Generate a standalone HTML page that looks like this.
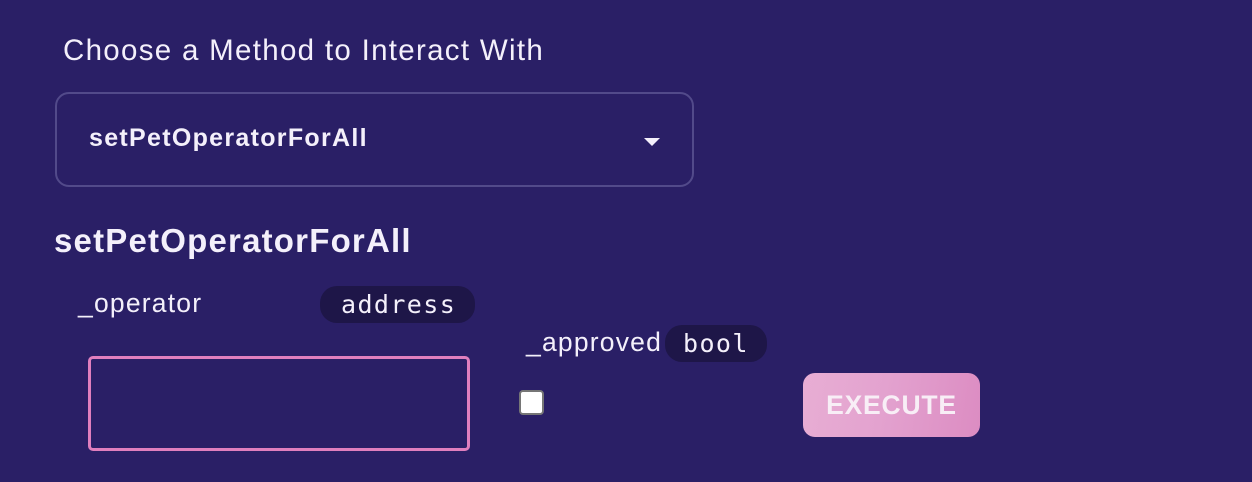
<!DOCTYPE html>
<html><head><style>
body{margin:0;width:1252px;height:482px;background:#2a1f66;font-family:"Liberation Sans",sans-serif;color:#f4f0fb;position:relative;overflow:hidden}
.a{position:absolute;white-space:nowrap}
.pill{background:#1e1648;border-radius:17px;font-family:"DejaVu Sans Mono","Liberation Mono",monospace;font-size:25px;letter-spacing:1.4px;padding:0 19px 0 21px;height:37px;line-height:37px}
</style></head><body>
<div class="a" style="left:63px;top:34px;font-size:29.5px;letter-spacing:1.3px">Choose a Method to Interact With</div>
<div class="a" style="left:55px;top:92px;width:639px;height:95px;border:2px solid #524a8a;border-radius:14px;box-sizing:border-box"></div>
<div class="a" style="left:89px;top:124px;font-size:25px;font-weight:bold;letter-spacing:1.3px">setPetOperatorForAll</div>
<svg class="a" style="left:644px;top:138px" width="16" height="9"><path d="M0 0h16L8 8z" fill="#f4f0fb"/></svg>
<div class="a" style="left:54px;top:222px;font-size:33px;font-weight:bold;letter-spacing:1.2px">setPetOperatorForAll</div>
<div class="a" style="left:78px;top:288px;font-size:26.5px;letter-spacing:1.2px">_operator</div>
<div class="a pill" style="left:320px;top:286px">address</div>
<div class="a" style="left:526px;top:327px;font-size:26.5px;letter-spacing:1.2px">_approved</div>
<div class="a pill" style="left:665px;top:325px;padding:0 18px">bool</div>
<div class="a" style="left:88px;top:356px;width:382px;height:95px;border:3px solid #e07fbe;border-radius:5px;box-sizing:border-box"></div>
<div class="a" style="left:519px;top:390px;width:25px;height:25px;background:#fff;border:2px solid #767676;border-radius:4px;box-sizing:border-box"></div>
<div class="a" style="left:803px;top:373px;width:177px;height:64px;border-radius:12px;background:linear-gradient(100deg,#e8aed4 0%,#e3a2cf 45%,#dc8cc2 100%);text-align:center;line-height:64px;font-size:26.5px;font-weight:bold;letter-spacing:0.8px;color:#f8eef6">EXECUTE</div>
</body></html>
